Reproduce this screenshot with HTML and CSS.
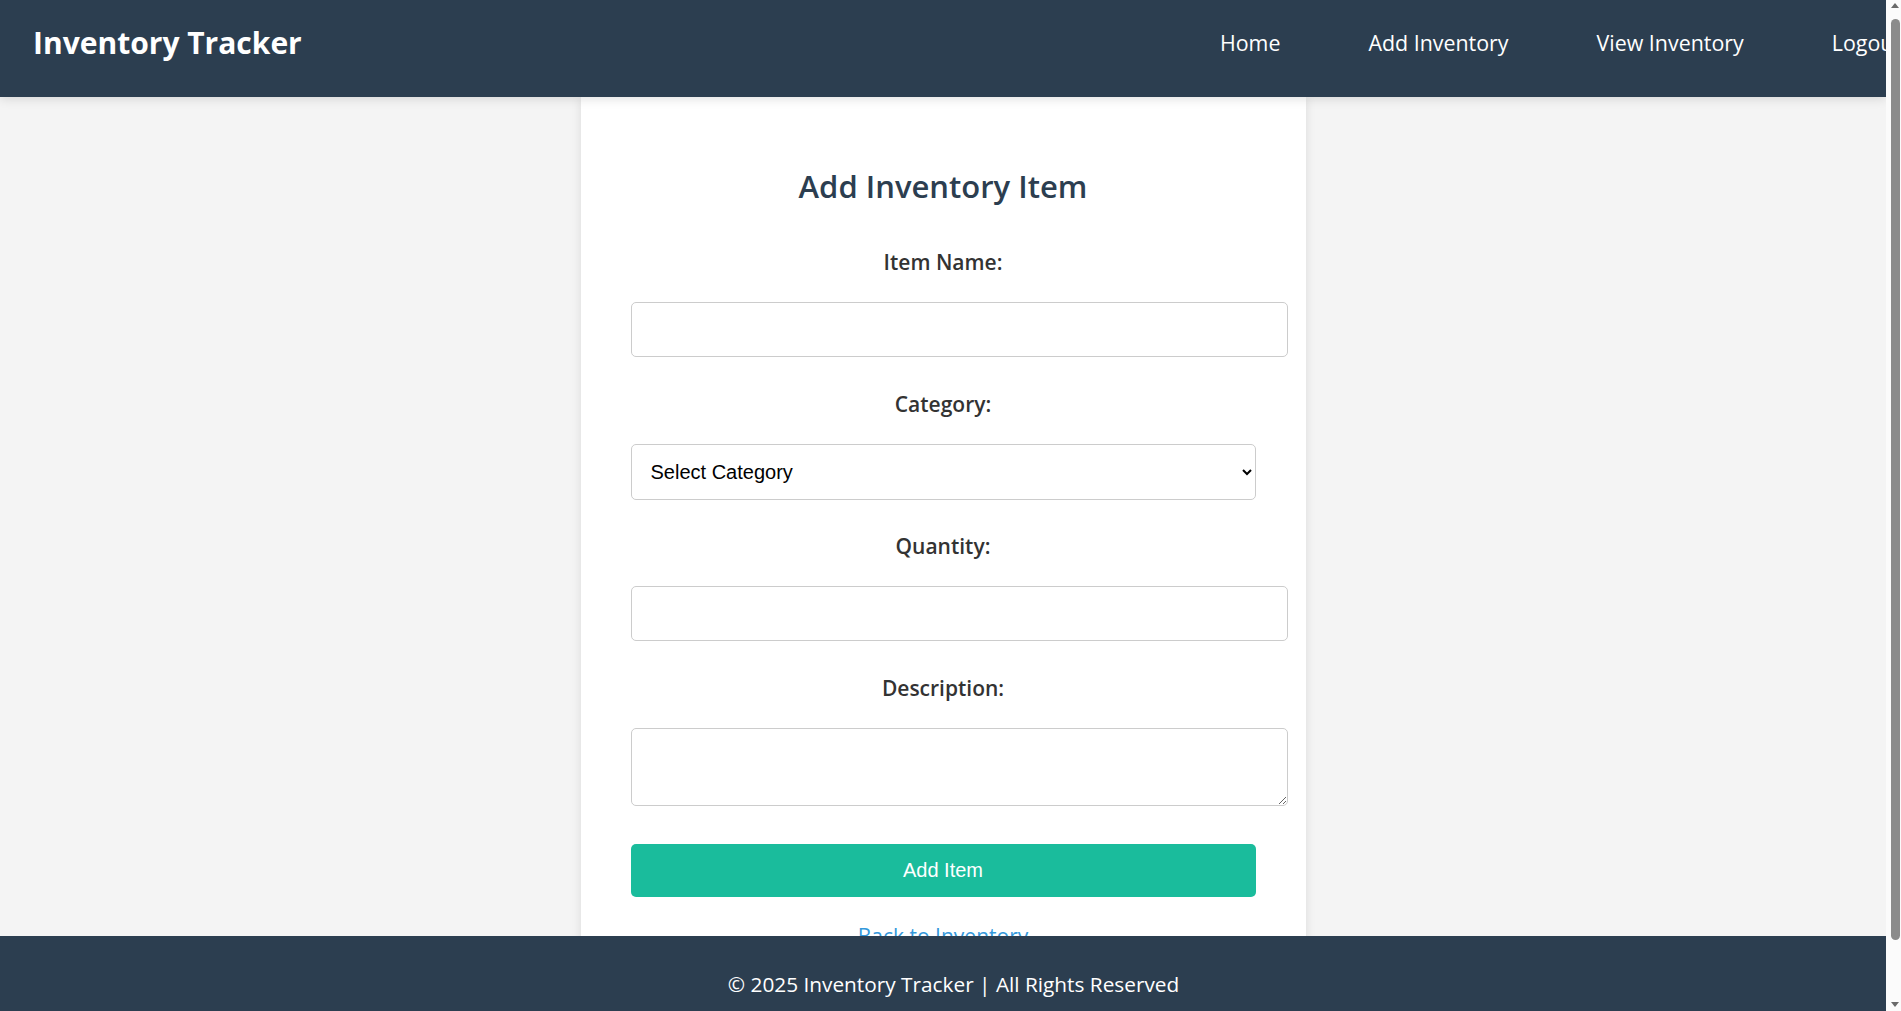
FILE: index.html
```html
<!DOCTYPE html>
<html lang="en">
<head>
<meta charset="utf-8">
<title>Add Inventory Item - Inventory Tracker</title>
<link rel="stylesheet" href="styles.css">
</head>
<body>
<div class="app">
  <header class="site-header">
    <h1 class="brand">Inventory Tracker</h1>
    <nav class="main-nav">
      <a href="#" class="nav-link">Home</a>
      <a href="#" class="nav-link">Add Inventory</a>
      <a href="#" class="nav-link">View Inventory</a>
      <a href="#" class="nav-link">Logout</a>
    </nav>
  </header>
  <main class="page">
    <section class="card">
      <h2 class="card-title">Add Inventory Item</h2>
      <form class="item-form">
        <label class="field-label" for="item-name">Item Name:</label>
        <input class="field" id="item-name" type="text">
        <label class="field-label" for="category">Category:</label>
        <select class="field field-select" id="category">
          <option>Select Category</option>
          <option>Electronics</option>
          <option>Furniture</option>
          <option>Office Supplies</option>
        </select>
        <label class="field-label" for="quantity">Quantity:</label>
        <input class="field" id="quantity" type="number">
        <label class="field-label" for="description">Description:</label>
        <textarea class="field field-area" id="description" rows="2"></textarea>
        <button class="submit-btn" type="button">Add Item</button>
      </form>
      <a href="#" class="back-link">Back to Inventory</a>
    </section>
  </main>
  <footer class="site-footer">
    <p class="footer-text">© 2025 Inventory Tracker | All Rights Reserved</p>
  </footer>
</div>
<div class="scrollbar" aria-hidden="true">
  <span class="sb-arrow sb-up"></span>
  <span class="sb-thumb"></span>
  <span class="sb-arrow sb-down"></span>
</div>
</body>
</html>
```

FILE: styles.css
```css
* {
  box-sizing: content-box;
}

html,
body {
  margin: 0;
  height: 100%;
  overflow: hidden;
}

body {
  display: flex;
  background: #f4f4f4;
  font-family: "Open Sans", "Noto Sans", sans-serif;
  color: #333;
}

/* Page scroller */
.app {
  flex: 1 1 auto;
  min-width: 0;
  height: 100vh;
  overflow-x: hidden;
  overflow-y: scroll;
  scrollbar-width: none;
  display: flex;
  flex-direction: column;
}

.app::-webkit-scrollbar {
  width: 0;
}

/* Window scrollbar */
.scrollbar {
  flex: none;
  width: 15px;
  height: 100vh;
  display: flex;
  flex-direction: column;
  align-items: center;
  background: #fbfbfb;
}

.sb-arrow {
  display: block;
  width: 0;
  height: 0;
  border-left: 4px solid transparent;
  border-right: 4px solid transparent;
}

.sb-up {
  margin-top: 3px;
  border-bottom: 5px solid #6a6a6a;
  margin-left: 2px;
}

.sb-down {
  margin-top: auto;
  margin-bottom: 4px;
  border-top: 5px solid #6a6a6a;
  margin-left: 2px;
}

.sb-thumb {
  display: block;
  width: 9px;
  height: 921px;
  margin-top: 11px;
  margin-left: 4px;
  border-radius: 5px;
  background: #8b8b8b;
}

/* Header */
.site-header {
  position: relative;
  z-index: 2;
  flex: none;
  display: flex;
  align-items: center;
  height: 85px;
  padding: 0 33px 12px 33px;
  background: #2c3e50;
  color: #fff;
  box-shadow: 0 2px 10px rgba(0, 0, 0, 0.12);
  overflow: hidden;
}

.brand {
  margin: 0;
  font-size: 30px;
  font-weight: 700;
  line-height: 40px;
  color: #fff;
  white-space: nowrap;
}

.main-nav {
  display: flex;
  gap: 88px;
  margin-left: auto;
  margin-right: -48px;
}

.nav-link {
  color: #fff;
  text-decoration: none;
  font-size: 21.4px;
  line-height: 30px;
  white-space: nowrap;
}

/* Main */
.page {
  flex: 1 0 auto;
  display: flex;
  justify-content: center;
}

.card {
  width: 625px;
  padding: 65px 50px 50px 50px;
  background: #fff;
  box-shadow: 0 0 10px rgba(0, 0, 0, 0.1);
  display: flex;
  flex-direction: column;
}

.card-title {
  margin: 0 0 37px 0;
  text-align: center;
  font-size: 31px;
  font-weight: 600;
  line-height: 48px;
  color: #2c3e50;
}

.item-form {
  display: flex;
  flex-direction: column;
}

.field-label {
  display: block;
  margin-bottom: 25px;
  text-align: center;
  font-size: 21px;
  font-weight: 600;
  line-height: 30px;
  color: #333;
}

.field {
  width: 100%;
  margin: 0 0 31.5px 0;
  padding: 15px;
  border: 1px solid #ccc;
  border-radius: 5px;
  background: #fff;
  font-family: "Liberation Sans", Arial, sans-serif;
  font-size: 20px;
  color: #000;
  outline: none;
}

.field-select {
  box-sizing: border-box;
}

.field-area {
  margin-bottom: 38px;
  resize: both;
}

.submit-btn {
  box-sizing: border-box;
  width: 100%;
  margin: 0 0 24px 0;
  padding: 15px;
  border: none;
  border-radius: 5px;
  background: #1abc9c;
  color: #fff;
  font-family: "Liberation Sans", Arial, sans-serif;
  font-size: 20px;
  line-height: 23px;
  cursor: pointer;
}

.back-link {
  display: block;
  text-align: center;
  color: #3498db;
  text-decoration: none;
  font-size: 21px;
  line-height: 30px;
}

/* Footer */
.site-footer {
  position: sticky;
  bottom: 0;
  z-index: 3;
  flex: none;
  padding: 33px 0 12px 21px;
  background: #2c3e50;
  color: #fff;
  text-align: center;
}

.footer-text {
  margin: 0;
  font-size: 20.8px;
  line-height: 30px;
  white-space: nowrap;
}
```
